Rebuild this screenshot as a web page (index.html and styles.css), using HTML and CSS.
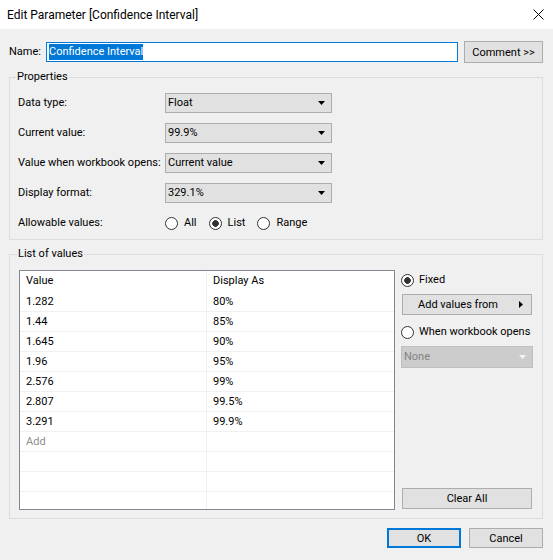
FILE: index.html
```html
<!DOCTYPE html>
<html lang="en">
<head>
  <meta charset="UTF-8">
  <title>Edit Parameter</title>
  <link rel="stylesheet" href="styles.css">
</head>
<body>

<div class="dialog">
  <div class="titlebar">
    <span class="title">Edit Parameter [Confidence Interval]</span>
    <svg class="close-icon" width="11" height="11" viewBox="0 0 11 11">
      <path d="M0.5 0.5 L10.5 10.5 M10.5 0.5 L0.5 10.5" stroke="#000" stroke-width="1" fill="none"/>
    </svg>
  </div>

  <div class="content">
    <div class="name-row">
      <span class="name-label">Name:</span>
      <div class="name-input"><span class="selected">Confidence Interval</span></div>
      <button class="btn comment-btn">Comment &gt;&gt;</button>
    </div>

    <fieldset class="group properties">
      <legend>Properties</legend>
      <div class="prop-row">
        <span class="prop-label">Data type:</span>
        <div class="dropdown"><span>Float</span><svg width="7" height="4" viewBox="0 0 7 4"><path d="M0 0 H7 L3.5 4 Z" fill="#000"/></svg></div>
      </div>
      <div class="prop-row">
        <span class="prop-label">Current value:</span>
        <div class="dropdown"><span>99.9%</span><svg width="7" height="4" viewBox="0 0 7 4"><path d="M0 0 H7 L3.5 4 Z" fill="#000"/></svg></div>
      </div>
      <div class="prop-row">
        <span class="prop-label">Value when workbook opens:</span>
        <div class="dropdown"><span>Current value</span><svg width="7" height="4" viewBox="0 0 7 4"><path d="M0 0 H7 L3.5 4 Z" fill="#000"/></svg></div>
      </div>
      <div class="prop-row">
        <span class="prop-label">Display format:</span>
        <div class="dropdown"><span>329.1%</span><svg width="7" height="4" viewBox="0 0 7 4"><path d="M0 0 H7 L3.5 4 Z" fill="#000"/></svg></div>
      </div>
      <div class="prop-row">
        <span class="prop-label">Allowable values:</span>
        <div class="radio-group">
          <label class="radio"><input type="radio" name="allow">All</label>
          <label class="radio"><input type="radio" name="allow" checked>List</label>
          <label class="radio"><input type="radio" name="allow">Range</label>
        </div>
      </div>
    </fieldset>

    <fieldset class="group list-group">
      <legend>List of values</legend>
      <div class="list-body">
        <div class="value-table">
          <div class="row header"><div class="cell">Value</div><div class="cell">Display As</div></div>
          <div class="row"><div class="cell">1.282</div><div class="cell">80%</div></div>
          <div class="row"><div class="cell">1.44</div><div class="cell">85%</div></div>
          <div class="row"><div class="cell">1.645</div><div class="cell">90%</div></div>
          <div class="row"><div class="cell">1.96</div><div class="cell">95%</div></div>
          <div class="row"><div class="cell">2.576</div><div class="cell">99%</div></div>
          <div class="row"><div class="cell">2.807</div><div class="cell">99.5%</div></div>
          <div class="row"><div class="cell">3.291</div><div class="cell">99.9%</div></div>
          <div class="row"><div class="cell add">Add</div><div class="cell"></div></div>
          <div class="row"><div class="cell"></div><div class="cell"></div></div>
          <div class="row"><div class="cell"></div><div class="cell"></div></div>
          <div class="row"><div class="cell"></div><div class="cell"></div></div>
        </div>

        <div class="side-panel">
          <label class="radio side-radio"><input type="radio" name="source" checked>Fixed</label>
          <button class="btn add-btn"><span>Add values from</span><svg width="4" height="7" viewBox="0 0 4 7"><path d="M0 0 L4 3.5 L0 7 Z" fill="#000"/></svg></button>
          <label class="radio side-radio when-radio"><input type="radio" name="source">When workbook opens</label>
          <div class="dropdown disabled"><span>None</span><svg width="7" height="4" viewBox="0 0 7 4"><path d="M0 0 H7 L3.5 4 Z" fill="#f4f4f4"/></svg></div>
          <button class="btn clear-btn">Clear All</button>
        </div>
      </div>
    </fieldset>

    <div class="footer">
      <button class="btn ok-btn">OK</button>
      <button class="btn">Cancel</button>
    </div>
  </div>
</div>

</body>
</html>
```

FILE: styles.css
```css
* {
  box-sizing: border-box;
}

body {
  margin: 0;
  background: #f0f0f0;
  color: #000;
  font-family: Roboto, 'Noto Sans', sans-serif;
  font-size: 11px;
  line-height: 16px;
  white-space: nowrap;
}

.dialog {
  width: 553px;
  height: 560px;
  background: #f0f0f0;
}

.titlebar {
  height: 29px;
  background: #fff;
  display: flex;
  align-items: center;
  justify-content: space-between;
  padding: 0 9px 0 7px;
}

.title {
  font-size: 12px;
}

.close-icon {
  display: block;
}

.content {
  padding: 0 10px 0 9px;
}

.btn {
  font-family: inherit;
  font-size: 11px;
  color: #000;
  background: #e1e1e1;
  border: 1px solid #adadad;
  padding: 0;
  height: 21px;
}

/* Name row */
.name-row {
  display: flex;
  align-items: center;
  margin-top: 12px;
  height: 22px;
}

.name-label {
  width: 37px;
}

.name-input {
  width: 412px;
  height: 20px;
  background: #fff;
  border: 1px solid #0078d7;
  padding: 1px 2px;
  line-height: 16px;
}

.selected {
  background: #0078d7;
  color: #fff;
  display: inline-block;
  line-height: 16px;
}

.comment-btn {
  width: 79px;
  height: 22px;
  margin-left: 6px;
}

/* Group boxes */
.group {
  margin: 0;
  border: 1px solid #dcdcdc;
  min-width: 0;
}

.group legend {
  padding: 0 1px;
  margin-left: -2px;
  line-height: 14px;
}

.properties {
  margin-top: 7px;
  padding: 9px 8px 6px 8px;
  display: flex;
  flex-direction: column;
  gap: 10px;
}

.prop-row {
  display: flex;
  align-items: center;
  height: 20px;
}

.prop-label {
  width: 147px;
}

.dropdown {
  width: 167px;
  height: 20px;
  background: #e1e1e1;
  border: 1px solid #adadad;
  display: flex;
  align-items: center;
  justify-content: space-between;
  padding: 0 6px 0 2px;
}

.dropdown svg {
  display: block;
}

.dropdown.disabled {
  width: 132px;
  height: 22px;
  background: #cccccc;
  border-color: #bfbfbf;
  color: #838383;
  margin-top: 5px;
}

/* Radios */
.radio-group {
  display: flex;
  gap: 12px;
}

.radio {
  display: flex;
  align-items: center;
}

.radio input {
  appearance: none;
  -webkit-appearance: none;
  flex-shrink: 0;
  width: 13px;
  height: 13px;
  margin: 0 6px 0 0;
  border: 1px solid #333;
  border-radius: 50%;
  background: #fff;
}

.radio input:checked {
  background: radial-gradient(circle, #333 0 3px, #fff 3.6px);
}

/* List of values */
.list-group {
  margin-top: 7px;
  padding: 9px 8px 8px 9px;
}

.list-body {
  display: flex;
  justify-content: space-between;
}

.value-table {
  width: 376px;
  height: 240px;
  border: 1px solid #828790;
  background: #fff;
  overflow: hidden;
}

.row {
  display: grid;
  grid-template-columns: 187px 1fr;
  height: 20px;
  border-bottom: 1px solid #f0f0f0;
}

.row.header {
  height: 21px;
  border-bottom: none;
}

.cell {
  padding-left: 6px;
  line-height: 19px;
}

.cell:first-child {
  border-right: 1px solid #f0f0f0;
}

.cell.add {
  color: #8d8d8d;
}

.side-panel {
  width: 132px;
  display: flex;
  flex-direction: column;
  margin-right: 1px;
}

.side-radio {
  height: 18px;
  margin-top: 1px;
}

.side-radio input {
  margin-right: 5px;
}

.add-btn {
  width: 130px;
  height: 21px;
  margin: 5px 0 0 1px;
  display: flex;
  align-items: center;
  padding-right: 8px;
}

.add-btn span {
  flex: 1;
  text-align: center;
}

.add-btn svg {
  display: block;
  margin-left: 6px;
}

.when-radio {
  margin-top: 8px;
}

.clear-btn {
  width: 130px;
  margin: auto 0 1px 1px;
}

/* Footer */
.footer {
  display: flex;
  justify-content: flex-end;
  gap: 8px;
  margin-top: 9px;
}

.footer .btn {
  width: 74px;
  height: 20px;
}

.footer .ok-btn {
  border: 2px solid #0078d7;
}
```
